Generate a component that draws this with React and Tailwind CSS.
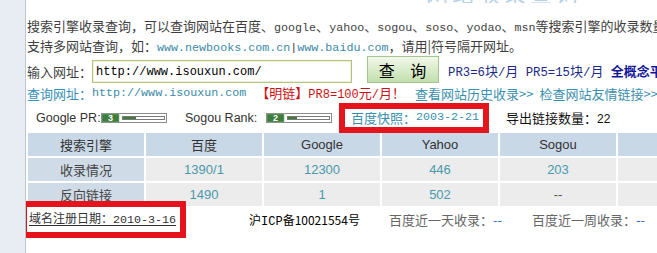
function L({ children, className = "" }) {
  return <span className={"font-['Liberation_Mono',monospace] text-[11.7px] " + className}>{children}</span>;
}

function PrBar({ value, fill }) {
  return (
    <svg width="66" height="10" viewBox="0 0 66 10">
      <rect x="0.5" y="0.5" width="65" height="9" fill="#fff" stroke="#8c8c8c" />
      <rect x="1" y="1" width="17" height="8" fill="#3d7d3d" stroke="#7fb07f" strokeWidth="0.6" />
      <text x="9.5" y="8" textAnchor="middle" fontSize="9" fontWeight="bold" fill="#fff" fontFamily="Liberation Sans, sans-serif">
        {value}
      </text>
      <rect x="21.5" y="3.5" width="42" height="3" fill="#fff" stroke="#7a7a7a" />
      <rect x="22" y="4" width={fill} height="2" fill="#3d7d3d" />
    </svg>
  );
}

const head = ["搜索引擎", "百度", "Google", "Yahoo", "Sogou", ""];
const rows = [
  ["收录情况", "1390/1", "12300", "446", "203", ""],
  ["反向链接", "1490", "1", "502", "--", ""],
];

export default function App() {
  return (
    <div className="flex h-[253px] w-[657px] overflow-hidden bg-white font-['Noto_Sans_CJK_SC',sans-serif] text-[13px] text-[#3f3f3f]">
      <div className="w-[26px] shrink-0 border-r border-[#bcc6d1] bg-[#e7edf3]" />

      <div className="min-w-0 flex-1 overflow-hidden">
        {/* clipped page title */}
        <div className="flex h-[3px] items-end overflow-hidden pl-[400px]">
          <span className="whitespace-nowrap text-[22px] leading-none tracking-[4px] text-[#b6d2ea]">网站收录查询</span>
        </div>

        <div className="mt-[13px] h-[20px] whitespace-nowrap pl-px leading-[20px]">
          搜索引擎收录查询，可以查询网站在百度、<L>google</L>、<L>yahoo</L>、<L>sogou</L>、<L>soso</L>、<L>yodao</L>、<L>msn</L>等搜索引擎的收录数量
        </div>
        <div className="h-[19px] whitespace-nowrap pl-px leading-[19px]">
          支持多网站查询，如：<L className="text-[#3b8aa6]">www.newbooks.com.cn</L>
          <L>|</L>
          <L className="text-[#3b8aa6]">www.baidu.com</L>，请用|符号隔开网址。
        </div>

        <div className="flex h-[29px] items-end whitespace-nowrap pl-px">
          <span className="mb-[2px] shrink-0 leading-[20px]">输入网址：</span>
          <div className="mb-[1px] flex h-[23px] w-[260px] shrink-0 items-center border border-[#b9c27c] bg-white pl-[3px] shadow-[inset_0_0_0_1px_#eef1d8]">
            <span className="font-['Liberation_Mono',monospace] text-[12px] text-black">http://www.isouxun.com/</span>
          </div>
          <button className="mb-[1px] ml-[15px] h-[27px] w-[72px] shrink-0 border border-[#a5c48f] bg-gradient-to-b from-[#f1f8ea] to-[#c2dfad] pl-[5px] text-[16px] leading-none tracking-[6px] text-black">
            查 询
          </button>
          <span className="mb-[1px] ml-[9px] shrink-0 leading-[20px] text-[#1c2a86]">
            <L className="text-[12.3px]">PR3=6</L>块<L className="text-[12.3px]">/</L>月<L className="text-[12.3px]"> PR5=15</L>块<L className="text-[12.3px]">/</L>月<L className="text-[12.3px]"> </L>
            <b className="text-[#14169a]">全概念平台</b>
          </span>
        </div>

        <div className="flex h-[19px] items-center whitespace-nowrap pl-px">
          <span className="text-[#3690b8]">查询网址：</span>
          <L className="text-[#3b8aa6]">http://www.isouxun.com</L>
          <span className="ml-[10px] text-[#cc1111]">
            【明链】<L className="text-[12px]">PR8=100</L>元<L className="text-[12px]">/</L>月！
          </span>
          <span className="ml-[10px] text-[#3b8fae]">查看网站历史收录&gt;&gt;</span>
          <span className="ml-[6px] text-[#3b8fae]">检查网站友情链接&gt;&gt;</span>
        </div>

        <div className="flex h-[30px] items-center whitespace-nowrap pl-[10px] font-['Liberation_Sans',sans-serif] text-[12.5px] text-[#333]">
          <span className="w-[65px] shrink-0">Google PR:</span>
          <PrBar value="3" fill={13} />
          <span className="ml-[18px] w-[81px] shrink-0">Sogou Rank:</span>
          <PrBar value="2" fill={9} />
          <div className="ml-[7px] flex h-[30px] w-[150px] shrink-0 items-center border-[6px] border-[#e5141c] pl-[6px] font-['Noto_Sans_CJK_SC',sans-serif] text-[13px] text-[#3b8fae]">
            百度快照：<L className="text-[11.2px]">2003-2-21</L>
          </div>
          <span className="ml-[17px] shrink-0 font-['Noto_Sans_CJK_SC',sans-serif] text-[13px] text-[#111]">
            导出链接数量：<span className="font-['Liberation_Sans',sans-serif] text-[12px]">22</span>
          </span>
        </div>

        <div className="ml-[2px] grid w-[710px] grid-cols-[116px_116px_116px_116px_116px_116px] gap-[2px]">
          {head.map((h, i) => (
            <div
              key={"h" + i}
              className={
                "flex h-[23px] items-center justify-center bg-[#c9d8e6] text-[#333] " +
                (i > 1 ? "font-['Liberation_Sans',sans-serif] text-[13px]" : "text-[13px]")
              }
            >
              {h}
            </div>
          ))}
          {rows.map((r, ri) =>
            r.map((c, ci) => (
              <div
                key={ri + "-" + ci}
                className={
                  ci === 0
                    ? "flex h-[23px] items-center justify-center bg-[#cfdbe7] text-[13px] text-[#444]"
                    : c === "--"
                    ? "flex h-[23px] items-center justify-center bg-[#ececec] font-['Liberation_Sans',sans-serif] text-[13px] text-[#555]"
                    : "flex h-[23px] items-center justify-center bg-[#ececec] font-['Liberation_Sans',sans-serif] text-[13px] text-[#4a98ad]"
                }
              >
                {c}
              </div>
            ))
          )}
        </div>

        <div className="flex items-start whitespace-nowrap">
          <div className="relative -ml-[5px] -mt-[5px] flex h-[37px] w-[165px] shrink-0 items-center border-[6px] border-[#e5141c] bg-white pl-[2px] text-[12px] text-[#333]">
            <span className="underline underline-offset-2">
              域名注册日期：<L className="text-[10px]">2010-3-16</L>
            </span>
          </div>
          <span className="ml-[63px] mt-[4px] shrink-0 text-[12px] leading-[20px] text-black">
            沪<L className="text-[12px]">ICP</L>备10021554号
          </span>
          <span className="ml-[29px] mt-[4px] shrink-0 leading-[20px] text-[#666]">
            百度近一天收录：<span className="text-[#2f6fd1]">--</span>
          </span>
          <span className="ml-[30px] mt-[4px] shrink-0 leading-[20px] text-[#666]">
            百度近一周收录：<span className="text-[#2f6fd1]">--</span>
          </span>
        </div>
      </div>
    </div>
  );
}
